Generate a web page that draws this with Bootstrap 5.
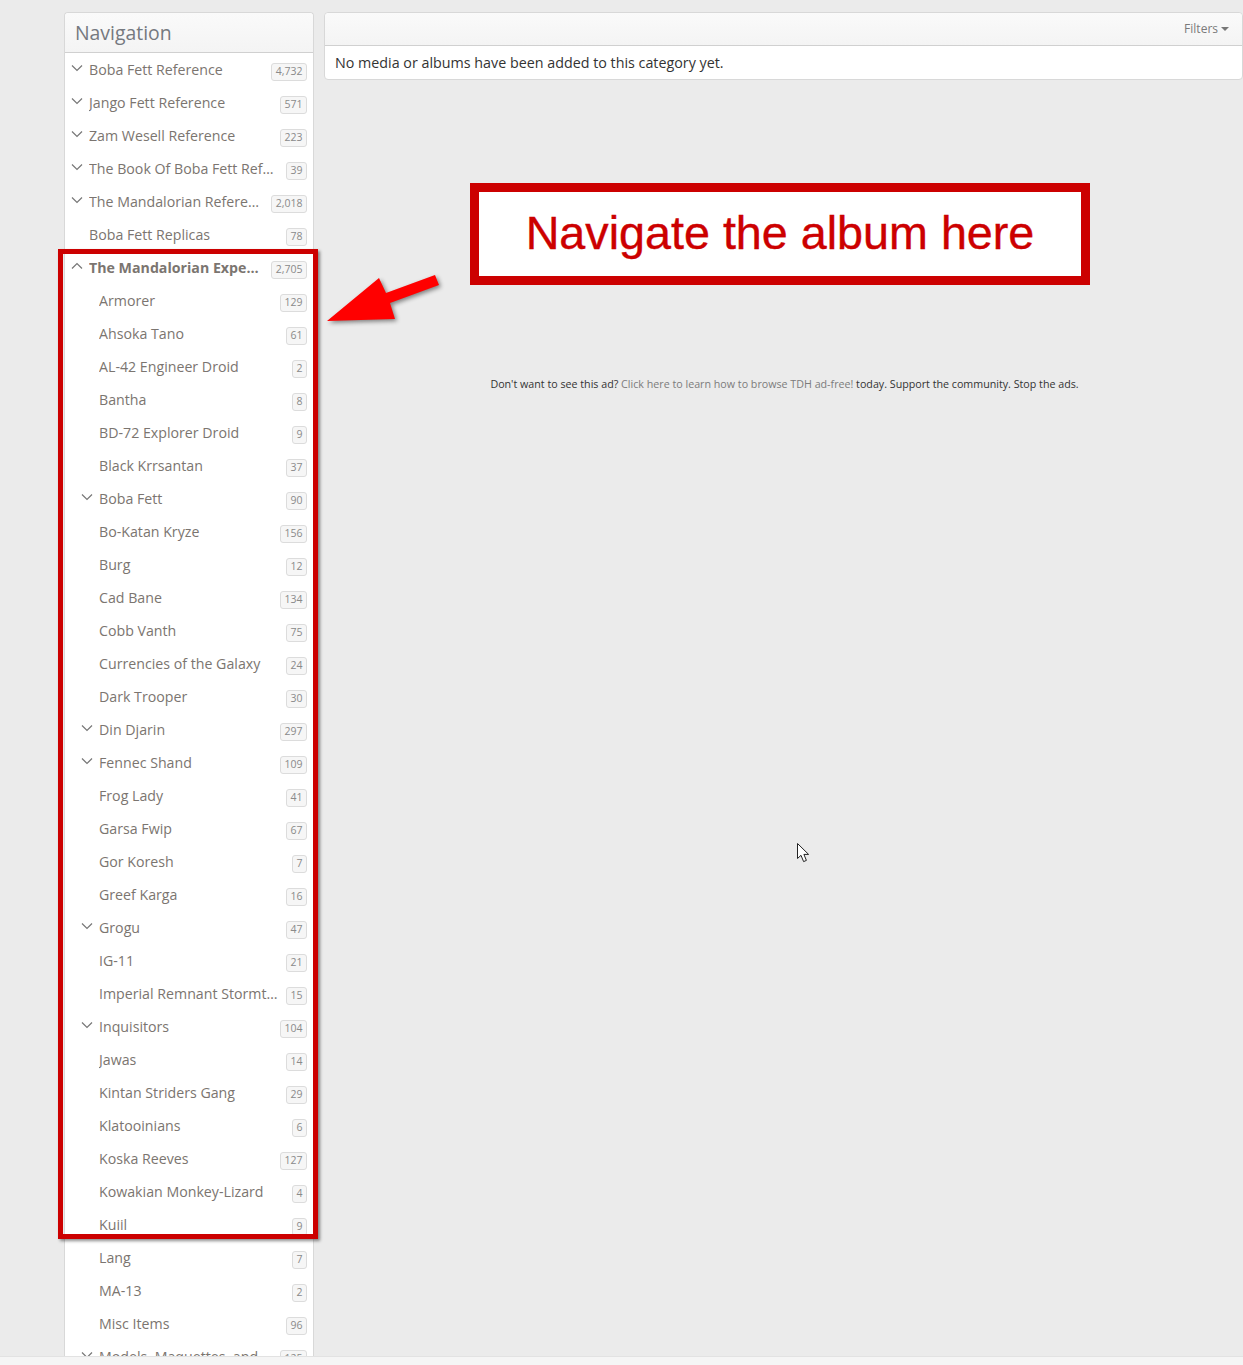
<!DOCTYPE html>
<html lang="en">
<head>
    <meta charset="UTF-8">
    <title>Navigate the album</title>
    <link href="https://cdn.jsdelivr.net/npm/bootstrap@5.3.0/dist/css/bootstrap.min.css" rel="stylesheet">
    <style>
        html, body { height: 100%; overflow: hidden; }
        body {
            background: #ebebeb;
            font-family: "Open Sans", sans-serif;
            color: #333;
        }
        .page-wrap { padding: 12px 0 0 64px; gap: 10px; }

        .side-box {
            width: 250px;
            flex: none;
            background: #fff;
            border: 1px solid #d8d8d8;
            border-bottom: 0;
            border-radius: 4px 4px 0 0;
        }
        .box-head {
            background: linear-gradient(#fafafa, #f4f4f4);
            border-bottom: 1px solid #d0d0d0;
            border-radius: 4px 4px 0 0;
        }
        .side-title {
            font-size: 19.4px;
            line-height: 39px;
            height: 40px;
            padding-left: 10px;
            color: #75797f;
        }
        .side-row {
            height: 33px;
            padding: 0 6px 0 24px;
            font-size: 14.2px;
            color: #7b7570;
        }
        .side-row.sub-row { padding-left: 34px; }
        .side-row.open-row { font-weight: 700; }
        .row-name { min-width: 0; flex: 1 1 auto; margin-top: 1px; }
        .row-chev { position: absolute; top: 11px; width: 12px; height: 8px; }
        .side-row .row-chev { left: 6px; }
        .side-row.sub-row .row-chev { left: 16px; }
        .count-tag {
            flex: none;
            margin-left: 7px;
            margin-top: 5px;
            padding: 0 3.5px;
            min-width: 15px;
            height: 18px;
            line-height: 15px;
            font-size: 10.5px;
            font-weight: 400;
            text-align: center;
            color: #8a8a8a;
            background: #f6f6f6;
            border: 1px solid #dcdcdc;
            border-radius: 3px;
        }

        .main-box {
            background: #fff;
            border: 1px solid #d8d8d8;
            border-radius: 4px;
        }
        .main-head { height: 33px; padding-right: 13px; font-size: 12px; color: #7a7a7a; }
        .main-head .dropdown-toggle::after {
            margin-left: 3px;
            vertical-align: 2px;
            border-top: 4.5px solid #777;
            border-right: 4px solid transparent;
            border-left: 4px solid transparent;
            border-bottom: 0;
        }
        .main-body { height: 33px; padding-left: 10px; font-size: 14.3px; line-height: 33px; color: #333; }
        .ad-note {
            margin-top: 296px;
            padding-left: 2px;
            font-size: 10.7px;
            line-height: 16px;
            color: #333;
        }
        .ad-note a { color: #7c7c7c; text-decoration: none; }

        .foot-strip {
            position: fixed;
            left: 0; right: 0; bottom: 0;
            height: 9px;
            background: #f5f5f5;
            border-top: 1px solid #e2e2e2;
        }

        /* annotations drawn over the screenshot */
        .mark-frame {
            position: absolute;
            left: 58px; top: 249px;
            width: 260px; height: 990px;
            border: 5px solid #cc0000;
            box-shadow: 2px 2px 3px rgba(0, 0, 0, .45);
        }
        .mark-callout {
            position: absolute;
            left: 470px; top: 183px;
            width: 620px; height: 102px;
            padding-bottom: 2px;
            border: 9px solid #cc0000;
            background: #fff;
            font-family: "Liberation Sans", Arial, sans-serif;
            font-size: 46.7px;
            -webkit-text-stroke: .4px #cc0000;
            color: #cc0000;
        }
        .mark-arrow { position: absolute; left: 320px; top: 268px; filter: drop-shadow(2px 2px 2px rgba(0, 0, 0, .45)); }
        .mouse-arrow { position: absolute; left: 797px; top: 843px; }
    </style>
</head>
<body>

<div class="d-flex page-wrap">
    <!-- Columna de navegacion -->
    <div class="side-box">
        <div class="box-head side-title">Navigation</div>
        <div id="sideList"></div>
    </div>

    <!-- Contenido -->
    <div class="flex-grow-1">
        <div class="main-box">
            <div class="box-head main-head d-flex align-items-center justify-content-end">
                <span class="dropdown-toggle">Filters</span>
            </div>
            <div class="main-body">No media or albums have been added to this category yet.</div>
        </div>
        <div class="ad-note text-center">Don't want to see this ad? <a href="#">Click here to learn how to browse TDH ad-free!</a> today. Support the community. Stop the ads.</div>
    </div>
</div>

<div class="foot-strip"></div>

<div class="mark-frame"></div>
<div class="mark-callout d-flex align-items-center justify-content-center">Navigate the album here</div>
<svg class="mark-arrow" width="125" height="60" viewBox="320 268 125 60">
    <polygon fill="#ff0000" points="327,321 379,278 386,293 435,275 439,285 390,303 395,319"/>
</svg>
<svg class="mouse-arrow" width="14" height="20" viewBox="0 0 14 20">
    <path d="M.5.5V15.5L4 12.3 6.6 18.6 9.4 17.4 6.9 11.4H11.6Z" fill="#fff" stroke="#222" stroke-width="1"/>
</svg>

<script>
    // [nombre, contador, nivel, chevron: 0 nada, 1 cerrado, 2 abierto]
    const rows = [
        ["Boba Fett Reference", "4,732", 0, 1],
        ["Jango Fett Reference", "571", 0, 1],
        ["Zam Wesell Reference", "223", 0, 1],
        ["The Book Of Boba Fett Reference", "39", 0, 1],
        ["The Mandalorian Reference", "2,018", 0, 1],
        ["Boba Fett Replicas", "78", 0, 0],
        ["The Mandalorian Experience", "2,705", 0, 2],
        ["Armorer", "129", 1, 0],
        ["Ahsoka Tano", "61", 1, 0],
        ["AL-42 Engineer Droid", "2", 1, 0],
        ["Bantha", "8", 1, 0],
        ["BD-72 Explorer Droid", "9", 1, 0],
        ["Black Krrsantan", "37", 1, 0],
        ["Boba Fett", "90", 1, 1],
        ["Bo-Katan Kryze", "156", 1, 0],
        ["Burg", "12", 1, 0],
        ["Cad Bane", "134", 1, 0],
        ["Cobb Vanth", "75", 1, 0],
        ["Currencies of the Galaxy", "24", 1, 0],
        ["Dark Trooper", "30", 1, 0],
        ["Din Djarin", "297", 1, 1],
        ["Fennec Shand", "109", 1, 1],
        ["Frog Lady", "41", 1, 0],
        ["Garsa Fwip", "67", 1, 0],
        ["Gor Koresh", "7", 1, 0],
        ["Greef Karga", "16", 1, 0],
        ["Grogu", "47", 1, 1],
        ["IG-11", "21", 1, 0],
        ["Imperial Remnant Stormtroopers", "15", 1, 0],
        ["Inquisitors", "104", 1, 1],
        ["Jawas", "14", 1, 0],
        ["Kintan Striders Gang", "29", 1, 0],
        ["Klatooinians", "6", 1, 0],
        ["Koska Reeves", "127", 1, 0],
        ["Kowakian Monkey-Lizard", "4", 1, 0],
        ["Kuiil", "9", 1, 0],
        ["Lang", "7", 1, 0],
        ["MA-13", "2", 1, 0],
        ["Misc Items", "96", 1, 0],
        ["Models, Maquettes, and Statues", "125", 1, 1]
    ];

    const chevrons = {
        1: '<path d="M1 1.5 6 6.5 11 1.5"/>',
        2: '<path d="M1 6.5 6 1.5 11 6.5"/>'
    };

    document.getElementById('sideList').innerHTML = rows.map(([name, count, level, chev]) => `
        <div class="side-row d-flex align-items-center position-relative ${level ? 'sub-row' : ''} ${chev === 2 ? 'open-row' : ''}">
            ${chev ? `<svg class="row-chev" viewBox="0 0 12 8" fill="none" stroke="#777" stroke-width="1.2">${chevrons[chev]}</svg>` : ''}
            <span class="row-name text-truncate">${name}</span>
            <span class="count-tag">${count}</span>
        </div>
    `).join('');
</script>
<script src="https://cdn.jsdelivr.net/npm/bootstrap@5.3.0/dist/js/bootstrap.bundle.min.js"></script>
</body>
</html>
